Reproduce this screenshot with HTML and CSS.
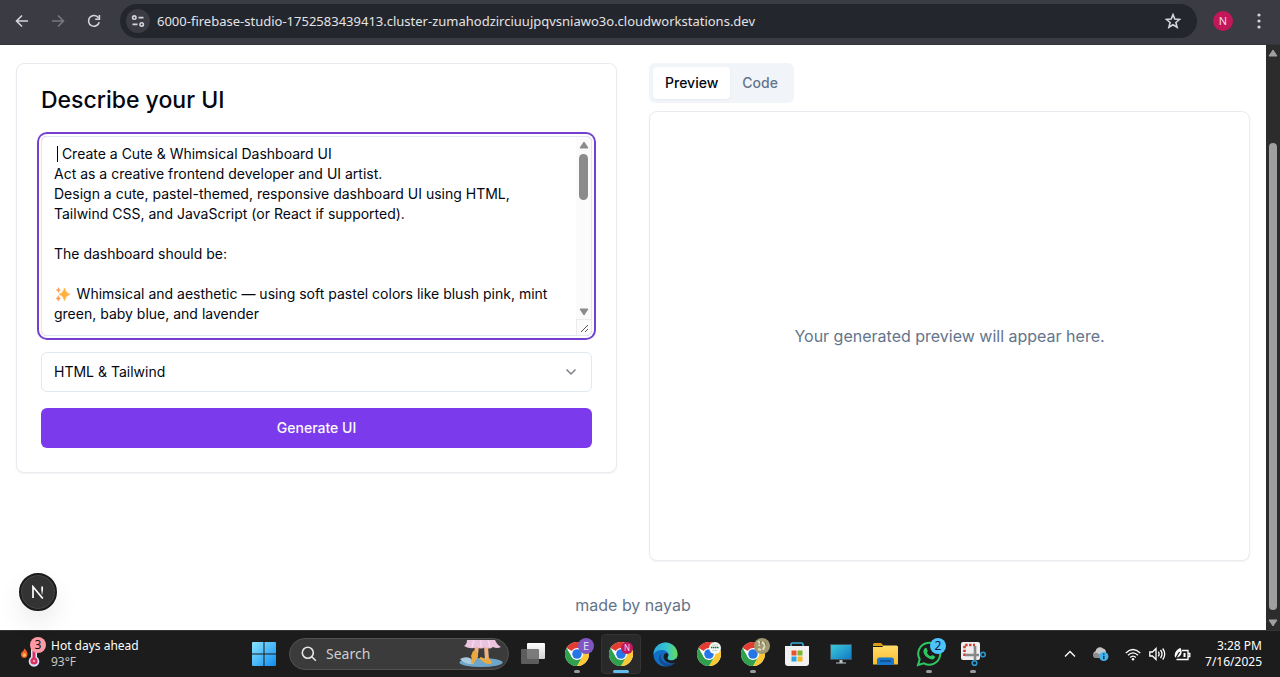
FILE: index.html
```html
<!DOCTYPE html>
<html lang="en">
<head>
<meta charset="utf-8">
<meta name="viewport" content="width=device-width, initial-scale=1">
<title>Describe your UI</title>
<link rel="stylesheet" href="styles.css">
</head>
<body>
<svg class="defs" aria-hidden="true">
  <defs>
    <linearGradient id="win" x1="0" y1="0" x2="1" y2="1"><stop offset="0" stop-color="#8be4ff"/><stop offset="1" stop-color="#0d8df0"/></linearGradient>
    <linearGradient id="mon" x1="0" y1="0" x2="1" y2="1"><stop offset="0" stop-color="#3dcbd9"/><stop offset="1" stop-color="#1177c4"/></linearGradient>
    <linearGradient id="fold" x1="0" y1="0" x2="0" y2="1"><stop offset="0" stop-color="#ffdc6b"/><stop offset="1" stop-color="#f9bd2c"/></linearGradient>
    <linearGradient id="edge-a" x1="0" y1="0" x2="1" y2="0"><stop offset="0" stop-color="#2aa6e0"/><stop offset=".55" stop-color="#36c5d0"/><stop offset="1" stop-color="#67dc54"/></linearGradient>
    <linearGradient id="tv" x1="0" y1="0" x2="0" y2="1"><stop offset="0" stop-color="#fff"/><stop offset="1" stop-color="#d2d2d2"/></linearGradient>
    <symbol id="chrome" viewBox="0 0 24 24">
      <circle cx="12" cy="12" r="12" fill="#fff"/>
      <path d="M12 12 1.6 6A12 12 0 0 1 22.4 6L12 6z" fill="#e23b30"/>
      <path d="M22.4 6A12 12 0 0 1 12 24L17.2 15 17.2 9 12 6z" fill="#fcc934"/>
      <path d="M1.6 6A12 12 0 0 0 12 24L17.2 15 12 18 6.8 15z" fill="#2fa14c"/>
      <circle cx="12" cy="12" r="6.1" fill="#fff"/><circle cx="12" cy="12" r="4.8" fill="#2577e8"/>
    </symbol>
  </defs>
</svg>

<header class="toolbar">
  <button class="nav-btn" aria-label="Back"><svg width="14" height="14" viewBox="0 0 14 14"><path d="M13 7H2M7 1.5 1.5 7 7 12.5" /></svg></button>
  <button class="nav-btn dim" aria-label="Forward"><svg width="14" height="14" viewBox="0 0 14 14"><path d="M1 7h11M7 1.5 12.5 7 7 12.5"/></svg></button>
  <button class="nav-btn" aria-label="Reload"><svg width="14" height="14" viewBox="0 0 14 14"><path d="M12.2 8.2A5.4 5.4 0 1 1 11.4 3.8M12.4 1v4.2H8.2"/></svg></button>
  <div class="address">
    <button class="site-info" aria-label="Site information"><svg width="14" height="14" viewBox="0 0 14 14"><circle cx="3.3" cy="3.6" r="1.7"/><path d="M7.5 3.6h5M1.5 10.4h5"/><circle cx="10.7" cy="10.4" r="1.7"/></svg></button>
    <input class="url" aria-label="Address" value="6000-firebase-studio-1752583439413.cluster-zumahodzirciuujpqvsniawo3o.cloudworkstations.dev">
    <button class="star" aria-label="Bookmark"><svg width="16" height="16" viewBox="0 0 16 16"><path d="M8 1.6 9.8 6l4.8.4-3.7 3.1 1.2 4.7L8 11.7l-4.1 2.5 1.2-4.7L1.4 6.4 6.200 6z"/></svg></button>
  </div>
  <button class="profile" aria-label="Profile">N</button>
  <button class="more" aria-label="More"><svg width="6" height="16" viewBox="0 0 6 16"><circle cx="3" cy="2" r="1.600"/><circle cx="3" cy="8" r="1.600"/><circle cx="3" cy="14" r="1.600"/></svg></button>
</header>

<div class="viewport">
  <div class="page">
    <main class="columns">
      <section class="card prompt">
        <h1><label for="prompt">Describe your UI</label></h1>
        <div class="editor">
          <textarea id="prompt" spellcheck="false">  Create a Cute &amp; Whimsical Dashboard UI
Act as a creative frontend developer and UI artist.
Design a cute, pastel-themed, responsive dashboard UI using HTML, Tailwind CSS, and JavaScript (or React if supported).

The dashboard should be:

&#8195;&#8196; Whimsical and aesthetic — using soft pastel colors like blush pink, mint green, baby blue, and lavender</textarea>
          <span class="caret"></span>
          <svg class="sparkles" role="img" aria-label="Sparkles" viewBox="0 0 16 16"><path d="M9.500 2Q10.300 7 15 8.300 10.300 9.600 9.500 14.800 8.700 9.600 4 8.300 8.700 7 9.500 2z" fill="#ffb03d" stroke="#ffb03d" stroke-width=".6"/><path d="M3.400 1.500Q3.700 3.600 5.600 4 3.700 4.500 3.400 6.500 3.100 4.500 1.200 4 3.100 3.600 3.400 1.500zM3.300 9.500Q3.700 11.900 5.700 12.400 3.700 12.900 3.300 15.200 2.900 12.900 .9 12.400 2.900 11.900 3.300 9.500z" fill="#ff9b57" stroke="#ff9b57" stroke-width=".4"/></svg>
          <div class="editor-bar">
            <svg width="10" height="8" viewBox="0 0 10 8"><path d="M5 1 9 7H1z" stroke="#8b8b8b" stroke-linejoin="round"/></svg>
            <span class="editor-thumb"></span>
            <svg width="10" height="8" viewBox="0 0 10 8"><path d="M5 7 1 1h8z" stroke="#8b8b8b" stroke-linejoin="round"/></svg>
            <span class="grip"><svg width="9" height="9" viewBox="0 0 9 9"><path d="M1 8 8 1M5 8l3-3"/></svg></span>
          </div>
        </div>
        <div class="select-wrap">
          <select aria-label="Framework"><option>HTML &amp; Tailwind</option></select>
          <svg width="12" height="8" viewBox="0 0 12 8"><path d="M1.500 1.500 6 6l4.500-4.500"/></svg>
        </div>
        <button class="generate">Generate UI</button>
      </section>
      <section class="output">
        <div class="tabs" role="tablist">
          <button class="tab active" role="tab" aria-selected="true">Preview</button>
          <button class="tab" role="tab" aria-selected="false">Code</button>
        </div>
        <div class="card preview" role="tabpanel">Your generated preview will appear here.</div>
      </section>
    </main>
    <footer class="credit">made by nayab</footer>
    <button class="dev-badge" aria-label="Open developer tools"><svg width="14" height="14" viewBox="0 0 14 14"><defs><linearGradient id="nf" x1="0" y1="0" x2="0" y2="1"><stop offset=".4" stop-color="#fff"/><stop offset="1" stop-color="#fff" stop-opacity=".1"/></linearGradient></defs><path d="M2 13V1.800L11.800 13.500" fill="none" stroke="#fff" stroke-width="1.700"/><path d="M10.300 1.500H12V10h-1.700z" fill="url(#nf)"/></svg></button>
  </div>
  <div class="page-bar">
    <svg width="10" height="8" viewBox="0 0 10 8"><path d="M5 1 9 7H1z" stroke="#a0a0a0" stroke-linejoin="round"/></svg>
    <span class="page-thumb"></span>
    <svg width="10" height="8" viewBox="0 0 10 8"><path d="M5 7 1 1h8z" stroke="#a0a0a0" stroke-linejoin="round"/></svg>
  </div>
</div>

<footer class="taskbar">
  <button class="weather">
    <span class="weather-icon">
      <svg width="22" height="30" viewBox="0 0 22 30"><path d="M4.300 9.500Q8 12.500 7.500 16 7 19 4 19 .8 18.500 1 15 1.200 13 2.500 12.500 3.800 12 4.300 9.500z" fill="#ef642d"/><circle cx="4.300" cy="16" r="1.700" fill="#ffc04a"/><path d="M11 18V8a3 3 0 0 1 6 0v10a5.300 5.300 0 1 1-6 0z" fill="#d9e3fa"/><path d="M14 10v10" stroke="#d9305f" stroke-width="3"/><circle cx="14" cy="22" r="3.600" fill="#d9305f"/><circle cx="14" cy="22" r="1.200" fill="#ff9eb4"/></svg>
      <span class="count">3</span>
    </span>
    <span class="weather-text"><span>Hot days ahead</span><span class="temp">93°F</span></span>
  </button>
  <nav class="apps">
    <button class="app" aria-label="Start"><svg width="24" height="24" viewBox="0 0 24 24" fill="url(#win)"><path d="M0 1a1 1 0 0 1 1-1h10.500v11.500H0zM12.500 0H23a1 1 0 0 1 1 1v10.500H12.500zM0 12.500h11.500V24H1a1 1 0 0 1-1-1zM12.500 12.500H24V23a1 1 0 0 1-1 1H12.500z"/></svg></button>
    <label class="search">
      <svg width="16" height="16" viewBox="0 0 16 16"><circle cx="6.800" cy="6.800" r="5.500"/><path d="m10.800 10.800 4 4"/></svg>
      <input type="search" placeholder="Search" aria-label="Search">
      <svg class="art" width="44" height="28" viewBox="0 0 44 28"><ellipse cx="22" cy="22.500" rx="21.500" ry="4.500" fill="#6ea5cb"/><path d="M1 19q5-3 10-1l4 6q-9 1-14-5z" fill="#a9cbe0"/><path d="M18 6 17 14M27 6l1 14" stroke="#eeb184" stroke-width="4"/><path d="M14 11q4-1 5 2l0 4-5 7-2-1 1-4-1-3z" fill="#eda83d"/><path d="M21 17q3 0 6 3l2-3 4 5q0 2-3 2-4 0-9-5z" fill="#eda83d"/><path d="M8 0H36Q38 5 42 7 38 9 34 7 30 10 26 7 22 10 18 7 12 10 5 6 8 4 8 0z" fill="#eac4df"/><path d="m15 0-2 7M22 0v7M29 0l2 7" stroke="#fae3f1" stroke-width="1"/></svg>
    </label>
    <button class="app" aria-label="Task view"><svg width="26" height="24" viewBox="0 0 26 24"><rect x="7" y="1" width="18" height="16" rx="1" fill="url(#tv)"/><rect x="1" y="7" width="18" height="15" rx="1" fill="#696969" fill-opacity=".85"/></svg></button>
    <button class="app open" aria-label="Chrome, profile E"><svg width="24" height="24"><use href="#chrome"/></svg><span class="tag violet">E</span></button>
    <button class="app current" aria-label="Chrome, profile N"><svg width="24" height="24"><use href="#chrome"/></svg><span class="tag pink">N</span></button>
    <button class="app" aria-label="Edge"><svg width="25" height="25" viewBox="0 0 25 25"><circle cx="12.500" cy="12.500" r="12" fill="#116fc5"/><path d="M.5 12.500A12 12 0 0 1 24.500 12.500C24.500 18 18 19.500 15 17.300 13.500 16 16 15 15.400 12 14.500 7 4 6 .5 12.500z" fill="url(#edge-a)"/><path d="M10 10.500C5 14 9 22 17 21.500q3.500-.2 5.800-2C20 25 12 26 8 21.500 4.500 17 6 12 10 10.500z" fill="#164a91"/><path d="M15.400 12.300C15.500 15 13.500 16 15 17.400 17 19 20 19 23 16.500L25 18 23.500 20Q18 22.500 13.500 19.800 9.500 17 11 12.500q2-3 4.400-.2z" fill="#1c1c1c"/></svg></button>
    <button class="app" aria-label="Chrome, third profile"><svg width="24" height="24"><use href="#chrome"/></svg><span class="tag white"><svg width="12" height="12" viewBox="0 0 12 12"><path d="M2 5.500h8" stroke="#1d7048" stroke-width="1.400" stroke-dasharray="1.500 .5"/><path d="M3 3h6M3.500 8.500h5" stroke="#c4d1c0"/></svg></span></button>
    <button class="app open" aria-label="Chrome, fourth profile"><svg width="24" height="24"><use href="#chrome"/></svg><span class="tag photo"><svg width="15" height="15" viewBox="0 0 15 15"><path d="M4 3 6 5 5 8M8 4l3 3-2 5M4 11l3 1" stroke="#e0dcc0" stroke-width="2" fill="none"/><path d="m7 3-1 4M11 4l1 4" stroke="#77734f"/></svg></span></button>
    <button class="app" aria-label="Microsoft Store"><svg width="24" height="25" viewBox="0 0 24 25"><path d="M6 5V2.500Q6 1 7.500 1h9Q18 1 18 2.500V5" fill="none" stroke="#39a9dc" stroke-width="1.600"/><path d="M0 4h24v17a3 3 0 0 1-3 3H3a3 3 0 0 1-3-3z" fill="#f1f1f1"/><path d="M6.500 8.500h5v5h-5z" fill="#e8532b"/><path d="M12.500 8.500h5v5h-5z" fill="#7cb72c"/><path d="M6.500 14.500h5v5h-5z" fill="#2ba3e1"/><path d="M12.500 14.500h5v5h-5z" fill="#f7b720"/></svg></button>
    <button class="app" aria-label="Desktop"><svg width="22" height="20" viewBox="0 0 22 20"><path d="M.5.500h21v15H.5z" fill="url(#mon)" stroke="#40545e"/><path d="M9.500 16h3v2.500H16v1H6v-1h3.500z" fill="#b9c3ca"/></svg></button>
    <button class="app" aria-label="File Explorer"><svg width="25" height="24" viewBox="0 0 25 24"><path d="M0 2.500A1.500 1.500 0 0 1 1.500 1H8l3 3H0z" fill="#d99b16"/><path d="M0 5h9l2-1.500h12.500A1.500 1.500 0 0 1 25 5v17.500H0z" fill="url(#fold)"/><path d="M4 23v-5a2.500 2.500 0 0 1 2.500-2.500h12A2.500 2.500 0 0 1 21 18v5z" fill="#1876cd"/><path d="M7 19h11" stroke="#0c4c92" stroke-width="1.500"/></svg></button>
    <button class="app open" aria-label="WhatsApp"><svg width="26" height="26" viewBox="0 0 26 26"><path d="M2 24 3.700 18.200A11 11 0 1 1 8 22.400z" fill="#1c1c1c" stroke="#2dc760" stroke-width="2"/><path d="M8.500 7.500q1.500-1.500 2.300.3l.9 2q.3.800-.9 2 1.300 2.500 3.900 3.500l1.400-1.300 2.600 1.300q1 .9-.4 2.200-1.600 1.500-4.200.5-5-2-6.600-6.500-.5-2.400 1-4z" fill="#2dc760"/></svg><span class="tag sky">2</span></button>
    <button class="app open" aria-label="Snipping Tool"><svg width="26" height="26" viewBox="0 0 26 26"><rect x="1" y="1" width="19" height="18" rx="2" fill="#eee"/><path d="M4.500 15V4H15" fill="none" stroke="#cf3c2d" stroke-width="2.600" stroke-dasharray="2.400 1.500"/><path d="M15 5v14M5 14h14" stroke="#888" stroke-width="2.600"/><circle cx="14.500" cy="22" r="2.300" fill="none" stroke="#299ad6" stroke-width="1.600"/><circle cx="23" cy="13.500" r="2.300" fill="none" stroke="#299ad6" stroke-width="1.600"/></svg></button>
  </nav>
  <div class="tray">
    <button aria-label="Show hidden icons"><svg width="12" height="8" viewBox="0 0 12 8"><path d="M1 6.500 6 1.500l5 5"/></svg></button>
    <button class="cloud" aria-label="OneDrive"><svg width="17" height="16" viewBox="0 0 17 16"><path d="M4 12a3.500 3.500 0 0 1-.5-6.700A4.500 4.500 0 0 1 11 2.500q3 .5 3 4V12z" fill="#c5c5c5" stroke="none"/><path d="M1 8q3-2.500 6 0l5 4H4Q.5 12 1 8z" fill="#8e8e8e" stroke="none"/><circle cx="11.800" cy="10.500" r="4.600" fill="#42b5ef" stroke="none"/><path d="M11.800 9.800v3.400M11.800 7.500v1.300" stroke="#123"/></svg></button>
    <button class="status" aria-label="Network, volume and battery">
      <svg width="16" height="13" viewBox="0 0 16 13"><path d="M.8 5Q8-2 15.200 5M3 7.300q5-4.800 10 0M5.200 9.500q2.800-2.700 5.600 0"/><circle cx="8" cy="11.300" r="1.200" fill="#fff" stroke="none"/></svg>
      <svg width="17" height="14" viewBox="0 0 17 14"><path d="M.8 5h2.700L7 1.500v11L3.500 9H.8zM9.300 4.600q1.600 2.400 0 4.800M11.500 3q3 4 0 8M13.700 1.500q4 5.500 0 11"/></svg>
      <svg width="17" height="15" viewBox="0 0 17 15"><path d="M8 3.500h6v9H2.500M14.200 6.500h1.600v3h-1.600"/><path d="M1 10.500Q-.5 4 6.500.8 9 6 6 9 3.500 11 1 10.500z" fill="#fff" stroke="none"/><path d="M1 12.500 5.500 5" stroke="#1c1c1c"/><path d="M10.500 6v4" stroke-width="2"/></svg>
    </button>
    <button class="clock"><span>3:28 PM</span><span>7/16/2025</span></button>
  </div>
</footer>
</body>
</html>
```
FILE: styles.css
```css
*, *::before, *::after { box-sizing: border-box; }

body {
  margin: 0;
  min-height: 100vh;
  display: grid;
  grid-template-rows: 45px 1fr 47px;
  background: #fff;
  color: #030712;
  font-family: Inter, "Liberation Sans", sans-serif;
}

button, input, select, textarea { font: inherit; color: inherit; margin: 0; }
button { display: flex; align-items: center; justify-content: center; padding: 0; border: 0; background: none; }
input, textarea { border: 0; background: none; outline: 0; }
svg { display: block; flex: none; }
.defs { position: absolute; width: 0; height: 0; }

/* Browser toolbar */
.toolbar {
  display: flex;
  align-items: center;
  padding: 0 18px 3px 4px;
  background: #3a3b43;
  border-bottom: 1px solid #34353b;
  color: #e3e3e3;
  font-family: "Noto Sans", "Open Sans", sans-serif;
}
.nav-btn { width: 36px; height: 32px; }
.nav-btn svg, .star svg, .site-info svg { fill: none; stroke: #d4d5d9; stroke-width: 1.6; }
.nav-btn.dim svg { stroke: #777980; }
.address {
  flex: 1;
  height: 34px;
  display: flex;
  align-items: center;
  gap: 7px;
  margin-left: 8px;
  padding: 0 14px 0 6px;
  border-radius: 17px;
  background: #24262e;
}
.site-info { width: 24px; height: 24px; border-radius: 50%; background: #3a3b43; }
.url { flex: 1; min-width: 0; padding: 0; font-size: 13px; line-height: 20px; }
.star { width: 20px; height: 20px; }
.profile {
  width: 20px;
  height: 20px;
  margin: 0 23px 0 16px;
  border-radius: 50%;
  background: #c2185b;
  color: #f7dbe7;
  font-size: 11px;
}
.more svg { fill: #d4d5d9; }

/* Page */
.viewport { display: flex; min-width: 0; }
.page { position: relative; flex: 1; min-width: 0; display: flex; flex-direction: column; }
.columns {
  display: grid;
  grid-template-columns: 1fr 1fr;
  align-items: start;
  gap: 32px;
  padding: 18px 16px 0;
}
.card { border: 1px solid #e8ebf0; border-radius: 8px; background: #fff; box-shadow: 0 1px 2px rgba(0, 0, 0, .05); }
.prompt { display: flex; flex-direction: column; gap: 16px; padding: 24px; }
h1 { margin: 0 0 8px; font-size: 23px; line-height: 24px; font-weight: 500; }

.editor {
  position: relative;
  display: flex;
  height: 200px;
  border: 1px solid #e2e8f0;
  border-radius: 6px;
  box-shadow: 0 0 0 2px #fff, 0 0 0 4px #7540d2;
}
textarea {
  flex: 1;
  min-width: 0;
  padding: 7px 12px 0;
  font-size: 14px;
  line-height: 20px;
  resize: none;
  overflow: hidden;
  border-radius: 6px;
}
.caret { position: absolute; left: 15px; top: 9px; width: 1px; height: 16px; background: #000; }
.sparkles { position: absolute; left: 13px; top: 149px; width: 16px; height: 16px; }
.editor-bar {
  width: 15px;
  display: flex;
  flex-direction: column;
  align-items: center;
  padding-top: 4px;
  background: #fbfbfb;
  border-radius: 0 6px 6px 0;
}
.editor-bar svg { fill: #8b8b8b; }
.editor-thumb { width: 9px; height: 46px; margin: 5px 0 auto; border-radius: 5px; background: #8b8b8b; }
.grip { display: flex; align-items: flex-end; justify-content: flex-end; width: 15px; height: 16px; margin-top: 3px; padding: 2px; border: solid #ebebeb; border-width: 1px 0 0 1px; }
.grip svg { fill: none; stroke: #555; }

.select-wrap { display: grid; align-items: center; }
.select-wrap > * { grid-area: 1 / 1; }
select {
  width: 100%;
  height: 40px;
  padding: 0 12px 2px;
  appearance: none;
  border: 1px solid #e2e8f0;
  border-radius: 6px;
  background: #fff;
  font-size: 14px;
}
.select-wrap svg { justify-self: end; margin-right: 15px; fill: none; stroke: #7c7f85; stroke-width: 1.5; pointer-events: none; }
.generate { height: 40px; padding-bottom: 2px; border-radius: 6px; background: #7c3aed; color: #f8fafc; font-size: 14px; font-weight: 500; }

.output { display: flex; flex-direction: column; align-items: flex-start; gap: 8px; }
.tabs { display: flex; height: 40px; padding: 4px; border-radius: 6px; background: #f1f5f9; color: #64748b; font-size: 14px; font-weight: 500; }
.tab { padding: 0 12px 2px; border-radius: 4px; }
.tab.active { background: #fff; color: #030712; box-shadow: 0 1px 2px rgba(0, 0, 0, .05); }
.preview { width: 100%; min-height: 450px; display: flex; align-items: center; justify-content: center; padding: 16px; color: #64748b; font-size: 16px; }
.credit { flex: 1; display: flex; align-items: center; justify-content: center; padding-top: 18px; color: #64748b; font-size: 16px; line-height: 24px; }
.dev-badge {
  position: absolute;
  left: 19px;
  bottom: 19px;
  width: 38px;
  height: 38px;
  border: 2px solid #1b1b1b;
  border-radius: 50%;
  background: #333;
  box-shadow: inset 0 0 0 1px #464646, 0 12px 24px rgba(0, 0, 0, .08);
}

.page-bar { width: 14px; display: flex; flex-direction: column; align-items: center; padding: 4px 0 3px; background: #2c2c2c; }
.page-bar svg { fill: #a0a0a0; }
.page-thumb { flex: 1; width: 8px; margin: 86px 0 9px; border-radius: 4px; background: #9f9f9f; }

/* Taskbar */
.taskbar {
  display: flex;
  border-top: 1px solid #333;
  background: #1c1c1c;
  color: #fff;
  font-family: "Noto Sans", "Open Sans", sans-serif;
  font-size: 12px;
  line-height: 16px;
}
.weather { width: 242px; justify-content: flex-start; gap: 4px; padding-left: 20px; }
.weather-icon { position: relative; width: 27px; }
.count { position: absolute; left: 10px; top: -2px; width: 16px; height: 16px; border-radius: 50%; background: #ff99a4; color: #111; text-align: center; }
.weather-text { display: grid; justify-items: start; }
.temp { color: #c8c8c8; }
.apps { display: flex; align-items: center; }
.app { position: relative; width: 44px; height: 46px; }
.app.open::after, .app.current::after { content: ""; position: absolute; bottom: 4px; width: 6px; height: 3px; border-radius: 2px; background: #9a9a9a; }
.app.current::after { width: 16px; background: #60bdf0; }
.app.current::before { content: ""; position: absolute; inset: 3px 2px; border: 1px solid #343434; border-radius: 4px; background: #292929; }
.app > svg { position: relative; }
.tag { position: absolute; left: 23px; top: 7px; width: 16px; height: 16px; border-radius: 50%; font-size: 11px; line-height: 16px; text-align: center; }
.violet { background: #7e57c2; color: #e5daf5; }
.pink { top: 11px; left: 22px; width: 12px; height: 12px; line-height: 12px; background: #c2185b; color: #f3d5e1; font-size: 8px; }
.white { top: 11px; left: 22px; width: 12px; height: 12px; background: #f5f7f4; }
.photo { background: #9f9870; }
.sky { background: #4cc2ff; color: #102030; font-size: 12px; }
.search {
  width: 220px;
  height: 32px;
  display: flex;
  align-items: center;
  gap: 9px;
  margin: 0 2px 0 3px;
  padding: 0 5px 0 11px;
  border: 1px solid #515151;
  border-radius: 16px;
  background: #3b3b3b;
}
.search > svg:first-child { fill: none; stroke: #e6e6e6; stroke-width: 1.6; }
.search input { flex: 1; min-width: 0; padding: 0; font-size: 14px; }
.search input::placeholder { color: #cfcfcf; opacity: 1; }
.tray { display: flex; align-items: center; margin-left: auto; padding-right: 18px; }
.tray svg { fill: none; stroke: #fff; stroke-width: 1.3; }
.cloud { margin: 0 16px; }
.status { gap: 8px; }
.clock { flex-direction: column; align-items: flex-end; margin-left: 14px; }
```
